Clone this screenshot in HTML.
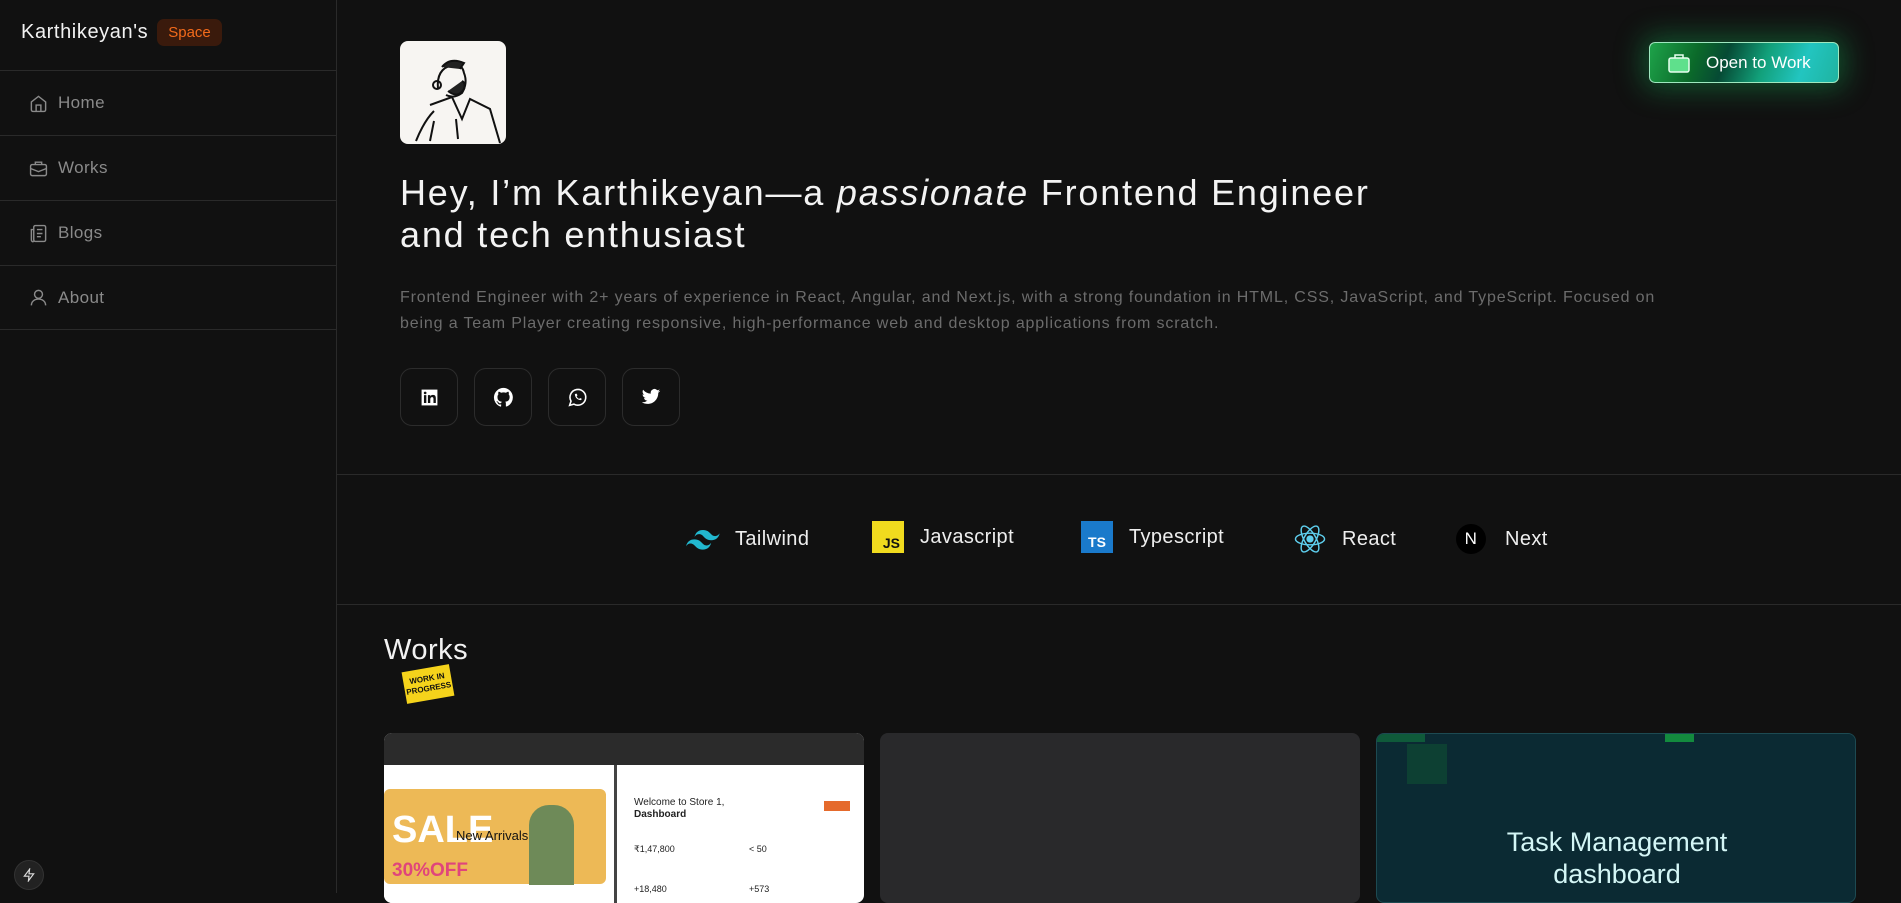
<!DOCTYPE html>
<html><head><meta charset="utf-8"><style>
*{box-sizing:border-box;margin:0;padding:0}
body{width:1901px;height:893px;overflow:hidden;background:#111111;font-family:"Liberation Sans",sans-serif;color:#eee;position:relative}
.side{position:absolute;left:0;top:0;width:337px;height:893px;border-right:1px solid #2a2a2a;background:#111}
.logo{position:absolute;left:21px;top:19px;font-size:20px;color:#f2f2f2;letter-spacing:0.6px;display:flex;align-items:center}
.badge{margin-left:9px;background:#3a1a0c;color:#f26a1b;font-size:15px;padding:5px 11px;border-radius:7px;letter-spacing:0}
.nav{position:absolute;left:0;width:336px;height:65px;border-top:1px solid #2a2a2a;display:flex;align-items:center;padding-left:29px;color:#8a8a8a;font-size:17px;letter-spacing:0.4px}
.nav svg{margin-right:10px}
.abs{position:absolute}
.h1{left:400px;top:172px;font-size:36px;line-height:42px;color:#f3f3f3;letter-spacing:1.8px;white-space:nowrap}
.p{left:400px;top:285px;width:1400px;font-size:16px;line-height:26px;color:#6c6c6c;letter-spacing:0.85px;white-space:nowrap}
.soc{top:368px;width:58px;height:58px;border:1px solid #2c2c2c;border-radius:12px;display:flex;align-items:center;justify-content:center}
.hr{left:337px;width:1564px;height:1px;background:#2a2a2a}
.tech{top:524px;height:30px;display:flex;align-items:center;font-size:20px;color:#eee;letter-spacing:0.4px}
.card{top:733px;width:480px;height:170px;border-radius:8px;overflow:hidden}
</style></head><body>
<div class="side">
 <div class="logo">Karthikeyan's<span class="badge">Space</span></div>
 <div class="nav" style="top:70px"><svg width="19" height="19" viewBox="0 0 24 24" fill="none" stroke="#8a8a8a" stroke-width="1.8"><path d="M3 10l9-7 9 7v10a2 2 0 0 1-2 2H5a2 2 0 0 1-2-2z"/><path d="M9 22v-8h6v8"/></svg>Home</div>
 <div class="nav" style="top:135px"><svg width="19" height="19" viewBox="0 0 24 24" fill="none" stroke="#8a8a8a" stroke-width="1.8"><rect x="2" y="7" width="20" height="14" rx="2"/><path d="M8 7V4h8v3M2 12l10 4 10-4"/></svg>Works</div>
 <div class="nav" style="top:200px"><svg width="19" height="19" viewBox="0 0 24 24" fill="none" stroke="#8a8a8a" stroke-width="1.8"><rect x="6" y="2" width="15" height="20" rx="2"/><path d="M6 7H3v13a2 2 0 0 0 3 2M10 7h7M10 12h7M10 16h5"/></svg>Blogs</div>
 <div class="nav" style="top:265px;border-bottom:1px solid #2a2a2a"><svg width="19" height="19" viewBox="0 0 24 24" fill="none" stroke="#8a8a8a" stroke-width="1.8"><circle cx="12" cy="8" r="5"/><path d="M3 22c0-5 4-8 9-8s9 3 9 8"/></svg>About</div>
 <div class="abs" style="left:14px;top:860px;width:30px;height:30px;border-radius:50%;background:#222;border:1px solid #333;display:flex;align-items:center;justify-content:center"><svg width="14" height="14" viewBox="0 0 24 24" fill="none" stroke="#ddd" stroke-width="2"><path d="M13 2L4 14h8l-1 8 9-12h-8z"/></svg></div>
</div>

<div class="abs" style="left:400px;top:41px;width:106px;height:103px;background:#f7f5f2;border-radius:8px;overflow:hidden">
<svg width="106" height="103" viewBox="0 0 106 103" fill="none" stroke="#111" stroke-width="2"><path d="M38 48q-2-20 14-24 10-2 12 8 4 10-2 20-8 6-16 2"/><path d="M42 26q8-10 22-4l-4 6" fill="#222"/><path d="M48 50q10 8 16-2 2-6-2-8" fill="#222"/><circle cx="37" cy="44" r="4"/><path d="M34 70q-10 10-18 30M30 64l22-8 10 22 8-20 20 10 10 34M56 78l2 20M34 80l-4 20"/></svg></div>

<div class="abs h1">Hey, I’m Karthikeyan—a <i>passionate</i> Frontend Engineer<br>and tech enthusiast</div>
<div class="abs p">Frontend Engineer with 2+ years of experience in React, Angular, and Next.js, with a strong foundation in HTML, CSS, JavaScript, and TypeScript. Focused on<br>being a Team Player creating responsive, high-performance web and desktop applications from scratch.</div>

<div class="abs soc" style="left:400px"><svg width="19" height="19" viewBox="0 0 24 24" fill="#fff"><path d="M2 2h20v20H2z"/><path fill="#111" d="M5 9h3v10H5zM6.5 4.5a1.7 1.7 0 1 1 0 3.4 1.7 1.7 0 0 1 0-3.4zM10 9h3v1.5c.6-1 1.7-1.8 3.4-1.8 3 0 3.6 2 3.6 4.6V19h-3v-5c0-1.2-.2-2.5-1.7-2.5S13 12.7 13 14v5h-3z"/></svg></div>
<div class="abs soc" style="left:474px"><svg width="21" height="21" viewBox="0 0 24 24" fill="#fff"><path d="M12 1a11 11 0 0 0-3.5 21.4c.6.1.8-.2.8-.5v-2c-3.1.7-3.7-1.300-3.7-1.3-.5-1.3-1.2-1.6-1.2-1.6-1-.7.1-.7.1-.7 1.1.1 1.7 1.1 1.7 1.1 1 1.7 2.6 1.2 3.2.9.1-.7.4-1.2.7-1.5-2.4-.3-5-1.2-5-5.4 0-1.2.4-2.2 1.1-3-.1-.3-.5-1.4.1-2.9 0 0 .9-.3 3 1.1a10 10 0 0 1 5.5 0c2.1-1.4 3-1.1 3-1.1.6 1.5.2 2.6.1 2.9.7.8 1.1 1.8 1.1 3 0 4.2-2.6 5.1-5 5.4.4.3.7 1 .7 2v3c0 .3.2.6.8.5A11 11 0 0 0 12 1z"/></svg></div>
<div class="abs soc" style="left:548px"><svg width="21" height="21" viewBox="0 0 24 24" fill="none" stroke="#fff" stroke-width="1.8"><path d="M3 21l1.6-4.8A9 9 0 1 1 8 19.6z"/><path d="M9 8c0 4 3 7 7 7l1-1.5-2-1-1 1c-1.5-.5-2.5-1.5-3-3l1-1-1-2z" fill="#fff" stroke="none"/></svg></div>
<div class="abs soc" style="left:622px"><svg width="20" height="20" viewBox="0 0 24 24" fill="#fff"><path d="M23 4.6a9 9 0 0 1-2.6.7 4.6 4.6 0 0 0 2-2.5 9 9 0 0 1-2.9 1.100 4.5 4.5 0 0 0-7.7 4.1A12.8 12.8 0 0 1 2.5 3.3a4.5 4.5 0 0 0 1.4 6 4.5 4.5 0 0 1-2-.6 4.5 4.5 0 0 0 3.6 4.5 4.5 4.5 0 0 1-2 .1 4.5 4.5 0 0 0 4.2 3.1A9 9 0 0 1 1 18.3 12.8 12.8 0 0 0 7.9 20.3c8.3 0 12.8-6.9 12.8-12.8v-.6A9 9 0 0 0 23 4.6z"/></svg></div>

<div class="abs" style="left:1649px;top:42px;width:190px;height:41px;border-radius:6px;border:1px solid #9fe8c0;background:linear-gradient(110deg,#1ea34a 0%,#0b6a2a 25%,#064a34 40%,#12a07a 60%,#22c5c0 80%,#1fb3a0 100%);box-shadow:0 0 28px 6px rgba(20,160,80,.45);display:flex;align-items:center;padding-left:18px;font-size:17px;color:#fff">
<svg width="22" height="20" viewBox="0 0 22 20" style="margin-right:16px"><rect x="1" y="5" width="20" height="14" rx="2" fill="#5fe08c" stroke="#e8fff0" stroke-width="1.5"/><path d="M7 5V2h8v3" fill="none" stroke="#e8fff0" stroke-width="1.5"/></svg>Open to Work</div>

<div class="abs hr" style="top:474px"></div>
<div class="abs tech" style="left:686px"><svg width="34" height="22" viewBox="0 0 34 22"><path d="M17 2c-4.5 0-7.3 2.3-8.5 6.8 1.7-2.3 3.7-3.1 5.9-2.5 1.3.3 2.2 1.3 3.2 2.3 1.6 1.7 3.5 3.6 7.6 3.6 4.5 0 7.3-2.3 8.5-6.8-1.7 2.3-3.7 3.1-5.9 2.5-1.3-.3-2.2-1.3-3.2-2.3C23 3.9 21.1 2 17 2zM8.5 11.4C4 11.4 1.2 13.7 0 18.2c1.7-2.3 3.7-3.1 5.9-2.5 1.3.3 2.2 1.3 3.2 2.3 1.6 1.7 3.5 3.6 7.6 3.6 4.5 0 7.3-2.3 8.5-6.8-1.7 2.3-3.7 3.1-5.9 2.5-1.3-.3-2.2-1.3-3.2-2.3-1.6-1.7-3.5-3.6-7.6-3.6z" fill="#22b8cf"/></svg><span style="margin-left:15px">Tailwind</span></div>
<div class="abs tech" style="left:872px;top:522px"><div style="width:32px;height:32px;background:#f0db1e;color:#111;font-size:14px;font-weight:bold;display:flex;align-items:flex-end;justify-content:flex-end;padding:0 4px 2px 0;letter-spacing:0">JS</div><span style="margin-left:16px">Javascript</span></div>
<div class="abs tech" style="left:1081px;top:522px"><div style="width:32px;height:32px;background:#1a7acb;color:#fff;font-size:14px;font-weight:bold;display:flex;align-items:flex-end;justify-content:center;padding-bottom:3px;letter-spacing:0">TS</div><span style="margin-left:16px">Typescript</span></div>
<div class="abs tech" style="left:1294px"><svg width="32" height="32" viewBox="-11 -11 22 22" fill="none" stroke="#5ecfee" stroke-width="1"><circle r="2" fill="#5ecfee"/><ellipse rx="10" ry="4"/><ellipse rx="10" ry="4" transform="rotate(60)"/><ellipse rx="10" ry="4" transform="rotate(120)"/></svg><span style="margin-left:16px">React</span></div>
<div class="abs tech" style="left:1456px"><div style="width:30px;height:30px;border-radius:50%;background:#000;color:#fff;font-size:17px;display:flex;align-items:center;justify-content:center">N</div><span style="margin-left:19px">Next</span></div>
<div class="abs hr" style="top:604px"></div>

<div class="abs" style="left:384px;top:634px;font-size:29px;color:#f3f3f3;letter-spacing:0.5px">Works</div>
<div class="abs" style="left:404px;top:668px;width:48px;height:32px;background:#f5d31b;transform:rotate(-10deg);color:#111;font-size:8px;font-weight:bold;line-height:10px;text-align:center;padding-top:6px;white-space:nowrap;overflow:hidden">WORK IN<br>PROGRESS</div>

<div class="abs card" style="left:384px;background:#fff">
 <div style="height:32px;background:#2b2b2b"></div>
 <div style="position:absolute;left:0;top:32px;width:228px;height:140px;background:#fff">
  <div style="position:absolute;left:0;top:24px;width:222px;height:95px;background:#edb956;border-radius:6px"></div>
  <div style="position:absolute;left:8px;top:44px;font-size:38px;font-weight:bold;color:#fff">SALE</div>
  <div style="position:absolute;left:72px;top:63px;font-size:13px;color:#111">New Arrivals</div>
  <div style="position:absolute;left:8px;top:95px;font-size:19px;font-weight:bold;color:#e0457b">30%OFF</div>
  <div style="position:absolute;left:145px;top:40px;width:45px;height:80px;background:#6e8a58;border-radius:20px 20px 0 0"></div>
 </div>
 <div style="position:absolute;left:230px;top:32px;width:3px;height:140px;background:#444"></div>
 <div style="position:absolute;left:250px;top:64px;font-size:10px;color:#222;line-height:12px">Welcome to Store 1,<br><b>Dashboard</b></div>
 <div style="position:absolute;left:440px;top:68px;width:26px;height:10px;background:#e56a2c"></div>
 <div style="position:absolute;left:250px;top:96px;font-size:9px;color:#222;line-height:40px">₹1,47,800<br>+18,480</div>
 <div style="position:absolute;left:365px;top:96px;font-size:9px;color:#222;line-height:40px">&lt; 50<br>+573</div>
</div>
<div class="abs card" style="left:880px;background:#29292b"></div>
<div class="abs card" style="left:1376px;background:#0b2a33;border:1px solid #1d4a52">
 <div style="position:absolute;left:0;top:0;width:480px;height:8px;background:linear-gradient(90deg,#0f5a3a 0 10%,#0b2a33 10% 60%,#138a3e 60% 66%,#0b2a33 66%)"></div>
 <div style="position:absolute;left:30px;top:10px;width:40px;height:40px;background:#0e4a33;opacity:.7"></div>
 <div style="position:absolute;left:0;top:92px;width:480px;text-align:center;font-size:27px;line-height:32px;color:#d4f6f6">Task Management<br>dashboard</div>
</div>
</body></html>
